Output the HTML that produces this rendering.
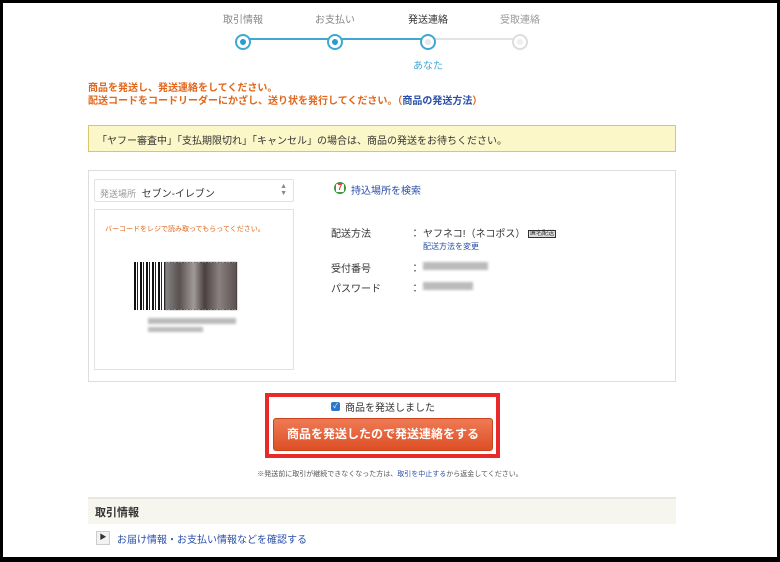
<!DOCTYPE html>
<html><head><meta charset="utf-8"><style>
*{margin:0;padding:0;box-sizing:border-box}
body{width:780px;height:562px;background:#000;font-family:"Liberation Sans","Noto Sans CJK JP",sans-serif;position:relative;overflow:hidden}
#pg{position:absolute;left:3px;top:3px;width:774px;height:554px;background:#fff}
.a{position:absolute;white-space:nowrap}
.lbl{font-size:10px;color:#888;transform:translateX(-50%)}
.c{position:absolute;width:16px;height:16px;border-radius:50%;border:2px solid #3fa8d2;background:#fff;top:34px}
.c i{position:absolute;left:3px;top:3px;width:6px;height:6px;border-radius:50%;background:#2a9ad0}
.or{color:#e0661a;font-size:10px;font-weight:bold}
.blur{background:#bbb;filter:blur(1.2px);position:absolute}
.k{font-size:10px;color:#333}
</style></head><body><div id="pg"></div>
<div class="a" style="left:243px;top:38px;width:185px;height:2px;background:#3fa8d2"></div>
<div class="a" style="left:428px;top:38px;width:92px;height:2px;background:#e3e3e3"></div>
<div class="c" style="left:235px"><i></i></div>
<div class="c" style="left:327px"><i></i></div>
<div class="c" style="left:420px"><i style="background:#e8e8e8"></i></div>
<div class="c" style="left:512px;border-color:#ddd"><i style="background:#eee"></i></div>
<div class="a lbl" style="left:243px;top:11px">取引情報</div>
<div class="a lbl" style="left:335px;top:11px">お支払い</div>
<div class="a lbl" style="left:428px;top:11px;color:#333">発送連絡</div>
<div class="a lbl" style="left:520px;top:11px;color:#999">受取連絡</div>
<div class="a lbl" style="left:428px;top:57px;color:#3fa8d2">あなた</div>
<div class="a or" style="left:88px;top:82px;line-height:13px">商品を発送し、発送連絡をしてください。<br>配送コードをコードリーダーにかざし、送り状を発行してください。（<span style="color:#2a4fa8">商品の発送方法</span>）</div>
<div class="a" style="left:88px;top:125px;width:588px;height:27px;background:#fbf7c8;border:1px solid #d8c56e;font-size:10px;color:#333;padding:6px 0 0 8px">「ヤフー審査中」「支払期限切れ」「キャンセル」の場合は、商品の発送をお待ちください。</div>
<div class="a" style="left:88px;top:170px;width:588px;height:212px;border:1px solid #ddd"></div>
<div class="a" style="left:94px;top:179px;width:200px;height:23px;border:1px solid #e2e2e2;border-radius:2px;font-size:10px;padding:5px 0 0 5px;color:#333"><span style="color:#999;font-size:9px">発送場所</span>&nbsp; セブン-イレブン<span style="position:absolute;right:6px;top:3px;font-size:7px;color:#888;line-height:7px">▲<br>▼</span></div>
<div class="a" style="left:94px;top:209px;width:200px;height:161px;border:1px solid #e2e2e2"></div>
<div class="a" style="left:105px;top:224px;font-size:7px;color:#e0661a">バーコードをレジで読み取ってもらってください。</div>
<div class="a" style="left:134px;top:262px;width:103px;height:48px;background:repeating-linear-gradient(90deg,#111 0 2px,#fff 2px 3px,#222 3px 4px,#fff 4px 6px)"></div>
<div class="a" style="left:165px;top:262px;width:72px;height:48px;background:linear-gradient(90deg,#888,#5a5050 20%,#a09a98 40%,#4a4040 55%,#8a8080 75%,#5a5050);filter:blur(.5px)"></div>
<div class="blur" style="left:148px;top:318px;width:88px;height:6px"></div>
<div class="blur" style="left:148px;top:327px;width:55px;height:5px"></div>
<div class="a" style="left:334px;top:182px;width:12px;height:12px;border-radius:50%;background:#3a9a3a;"><div style="position:absolute;left:2px;top:2px;width:8px;height:8px;background:#fff;border-radius:1px;color:#e33;font-size:8px;line-height:8px;text-align:center;font-weight:bold">7</div></div>
<div class="a" style="left:351px;top:182px;font-size:10px;color:#2a4fa8">持込場所を検索</div>
<div class="a k" style="left:331px;top:225px">配送方法</div>
<div class="a k" style="left:331px;top:260px">受付番号</div>
<div class="a k" style="left:331px;top:280px">パスワード</div>
<div class="a k" style="left:410px;top:225px">：</div>
<div class="a k" style="left:410px;top:260px">：</div>
<div class="a k" style="left:410px;top:280px">：</div>
<div class="a" style="left:423px;top:225px;font-size:10px;color:#333">ヤフネコ!（ネコポス） <span style="font-size:6px;border:1px solid #333;background:#ddd;padding:0 1px;vertical-align:2px">匿名配送</span></div>
<div class="a" style="left:423px;top:241px;font-size:8px;color:#2a4fa8">配送方法を変更</div>
<div class="blur" style="left:423px;top:262px;width:65px;height:8px"></div>
<div class="blur" style="left:423px;top:282px;width:50px;height:8px"></div>
<div class="a" style="left:265px;top:393px;width:235px;height:65px;border:4px solid #e8292a"></div>
<div class="a" style="left:331px;top:402px;width:9px;height:9px;background:#2b77c9;border-radius:2px;color:#fff;font-size:7px;line-height:9px;text-align:center">✓</div>
<div class="a" style="left:345px;top:399px;font-size:10px;color:#333">商品を発送しました</div>
<div class="a" style="left:273px;top:418px;width:220px;height:33px;background:linear-gradient(#ef7a55,#dd4f25);border:1px solid #c8431c;border-radius:3px;color:#fff;font-size:12px;font-weight:bold;text-align:center;line-height:31px">商品を発送したので発送連絡をする</div>
<div class="a" style="left:390px;top:469px;transform:translateX(-50%);font-size:7px;color:#555">※発送前に取引が継続できなくなった方は、<span style="color:#2a4fa8">取引を中止する</span>から返金してください。</div>
<div class="a" style="left:88px;top:497px;width:588px;height:27px;background:#f6f5ee;border-top:2px solid #e8e6dd;font-size:11px;font-weight:bold;color:#333;padding:5px 0 0 7px">取引情報</div>
<div class="a" style="left:96px;top:531px;width:14px;height:14px;border:1px solid #ccc;background:#f2f2f2;font-size:7px;text-align:center;line-height:12px;color:#333">▶</div>
<div class="a" style="left:117px;top:531px;font-size:10px;color:#2a4fa8">お届け情報・お支払い情報などを確認する</div>
</body></html>
